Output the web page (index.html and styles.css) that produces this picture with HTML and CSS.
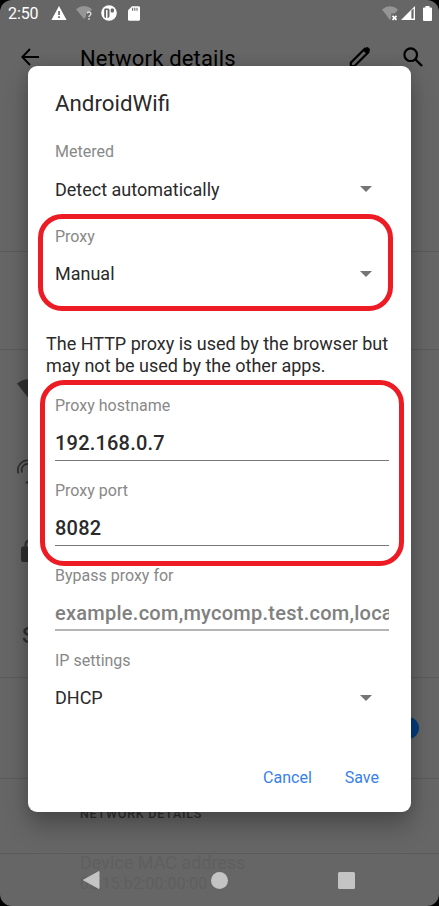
FILE: index.html
```html
<!DOCTYPE html>
<html lang="en">
<head>
<meta charset="utf-8">
<title>Network details</title>
<link rel="stylesheet" href="styles.css">
</head>
<body>
<div class="phone">
  <header class="status">
    <span class="clock">2:50</span>
    <svg class="warn" width="16" height="14" viewBox="0 0 16 14"><path d="M8 0L15.600 14H.4z" fill="#fff"/><path d="M7.200 5h1.700v4H7.200zm0 5.300h1.700V12H7.200z" fill="#666"/></svg>
    <svg class="wifi" width="18" height="15" viewBox="0 0 18 15"><path d="M0 3.200Q8-3 16 3.200L8 13z" fill="#959595"/><path d="M10 6h8v9h-8z" fill="#666"/><path d="M11 7.500c.2-2 3.900-2 3.900.2 0 1.600-1.900 1.500-1.900 3.400m0 1v1.600" fill="none" stroke="#ddd" stroke-width="1.400"/></svg>
    <svg class="pcircle" width="16" height="16" viewBox="0 0 16 16"><circle cx="8" cy="8" r="7.800" fill="#fff"/><path d="M4 3.500h3q1.500 0 1.500 1.500v6q0 2-2 2H5q-1.800 0-1.800-2V5q0-1.500.8-1.500z" fill="#666"/><path d="M5 5h1.500v8.500H5z" fill="#fff"/><rect x="9.700" y="3.500" width="3.200" height="4" rx="1" fill="#666"/></svg>
    <svg class="sd" width="12" height="15" viewBox="0 0 12 15"><path d="M4 .2h6.500Q12 .2 12 1.600v11.700q0 1.500-1.400 1.500H1.400Q0 14.800 0 13.300V4.200z" fill="#fff"/><path d="M4 1.700h1.200v3H4zm2.200 0h1.200v3H6.200zm2.200 0h1.200v3H8.400z" fill="#777"/></svg>
    <span class="spacer"></span>
    <svg width="16" height="15" viewBox="0 0 16 15"><path d="M0 3.500Q8-3 16 3.500L8 14z" fill="#959595"/><path d="M9.200 7.500H16V15H9.200z" fill="#666"/><path d="M10.500 9.800l4 4m0-4l-4 4" stroke="#fff" stroke-width="1.700"/></svg>
    <svg class="signal" width="14" height="14" viewBox="0 0 14 14"><path d="M14 0v14H0z" fill="#fff"/><path d="M10.400 4.500L12.600 2.500v10h-2.200z" fill="#666"/></svg>
    <svg class="battery" width="9" height="15" viewBox="0 0 9 15"><path d="M2.500 0h4v1.500H8q1 0 1 1V14q0 1-1 1H1q-1 0-1-1V2.500q0-1 1-1h1.500z" fill="#fff"/></svg>
  </header>
  <div class="toolbar">
    <svg class="back" width="18" height="18" viewBox="0 0 18 18"><path d="M18 9H2M9 1L1.300 9 9 17" fill="none" stroke="#000" stroke-width="1.900"/></svg>
    <span class="heading">Network details</span>
    <svg class="pencil" width="22" height="22" viewBox="0 0 22 22"><path d="M1.800 20.200v-3.500L15.800 2.700l3.500 3.500L5.300 20.200z" fill="none" stroke="#000" stroke-width="2.200"/><path d="M14 4.500L17 1.500q1.200-1 2.300 0l1.300 1.300q1 1.200 0 2.300l-3 3z"/></svg>
    <svg class="search" width="20" height="20" viewBox="0 0 20 20"><circle cx="7.700" cy="7.700" r="6.300" fill="none" stroke="#000" stroke-width="2.200"/><path d="M12 12l7 7" stroke="#000" stroke-width="2.400"/></svg>
  </div>
  <div class="section hero"></div>
  <div class="section actions"></div>
  <div class="section info">
    <svg width="22" height="19" viewBox="0 0 22 19"><path d="M0 4.500Q11-4 22 4.500L11 18.500z" fill="#303030"/></svg>
    <svg class="rings" width="22" height="26" viewBox="0 0 22 26"><path d="M1.500 14.500C-1 7 5 1 11.500 1.500M5 13.500C3.500 8 7 4.500 12 5" fill="none" stroke="#303030" stroke-width="1.700"/><circle cx="10" cy="23.500" r="1.300" fill="#303030"/></svg>
    <svg class="lock" width="18" height="23" viewBox="0 0 18 23"><path d="M4.500 9V6q0-4.500 4.500-4.500T13.500 6v3" fill="none" stroke="#303030" stroke-width="2"/><rect y="7.500" width="18" height="15.500" rx="2" fill="#303030"/></svg>
    <span class="letter">S</span>
  </div>
  <div class="section switch-row"><span class="switch"></span></div>
  <div class="section caption">NETWORK DETAILS</div>
  <div class="device"><div class="device-name">Device MAC address</div><div class="device-mac">02:15:b2:00:00:00</div></div>

  <nav class="nav">
    <svg width="17" height="20" viewBox="0 0 17 20"><path d="M16 1.500v17L.5 10z" fill="#c4c4c4" stroke="#c4c4c4" stroke-linejoin="round"/></svg>
    <span class="home"></span>
    <span class="recent"></span>
  </nav>

  <main class="dialog">
    <h1>AndroidWifi</h1>
    <div class="field"><div class="label">Metered</div><div class="value">Detect automatically<i class="caret"></i></div></div>
    <div class="field"><div class="label">Proxy</div><div class="value">Manual<i class="caret"></i></div></div>
    <p class="note">The HTTP proxy is used by the browser but<br>may not be used by the other apps.</p>
    <div class="field"><div class="label">Proxy hostname</div><div class="input">192.168.0.7</div></div>
    <div class="field"><div class="label">Proxy port</div><div class="input">8082</div></div>
    <div class="field"><div class="label">Bypass proxy for</div><div class="input hint">example.com,mycomp.test.com,loca</div></div>
    <div class="field"><div class="label">IP settings</div><div class="value">DHCP<i class="caret"></i></div></div>
    <div class="buttons"><span>Cancel</span><span>Save</span></div>
  </main>
  <div class="mark mark-proxy"></div>
  <div class="mark mark-host"></div>
</div>
</body>
</html>
```

FILE: styles.css
```css
* { box-sizing: border-box; }
html { background: #000; }
body { margin: 0; font-family: Roboto, sans-serif; }
svg { display: block; flex: none; }

.phone {
  position: relative;
  width: 439px;
  height: 906px;
  overflow: hidden;
  border-radius: 12px;
  background: #666;
}

.status { display: flex; align-items: center; height: 26px; padding: 0 7px 0 8px; color: #fff; }
.clock { width: 43px; font-size: 16px; letter-spacing: -0.1px; }
.wifi { margin-left: 9px; }
.pcircle { margin-left: 7px; }
.sd { margin-left: 11px; }
.spacer { flex: 1; }
.signal { margin-left: 3px; }
.battery { margin-left: 8px; }

.toolbar { display: flex; align-items: center; height: 63px; padding: 0 16px 0 21px; }
.heading { margin-left: 41px; padding-top: 1px; font-size: 22px; letter-spacing: 0.18px; flex: 1; }
.back, .pencil, .search { position: relative; top: -1px; }
.pencil { margin-right: 32px; }

.section { border-bottom: 1px solid #5b5b5b; }
.hero { height: 163px; }
.actions { height: 98px; }
.info { height: 328px; padding: 29px 17px; }
.rings { margin-top: 61px; }
.lock { margin: 54px 0 0 4px; }
.letter { display: block; margin: 61px 0 0 5px; font-size: 22px; font-weight: 500; color: #303030; }
.switch-row { display: flex; align-items: center; justify-content: flex-end; height: 101px; padding-right: 20px; }
.switch { width: 22px; height: 22px; border-radius: 50%; background: #043d7c; }
.caption { height: 75px; padding: 27px 0 0 80px; font-size: 12.5px; line-height: 15px; letter-spacing: 0.75px; color: #303030; font-weight: 500; }
.device { height: 53px; padding-left: 80px; color: #5f5f5f; }
.device-name { font-size: 18px; line-height: 18px; }
.device-mac { font-size: 16px; line-height: 24px; }

.nav { position: absolute; left: 0; right: 0; top: 854px; height: 52px; display: flex; align-items: center; padding-left: 83px; }
.home { width: 17px; height: 17px; border-radius: 50%; margin-left: 111px; background: #c4c4c4; }
.recent { width: 17px; height: 17px; border-radius: 1.5px; margin-left: 110px; background: #c4c4c4; }

.dialog {
  position: absolute;
  left: 28px;
  top: 66px;
  width: 383px;
  height: 746px;
  padding: 24px 22px 0 27px;
  border-radius: 9px;
  background: #fff;
  color: #2a2a2a;
  box-shadow: 0 14px 24px rgba(0, 0, 0, 0.26), 0 0 14px rgba(0, 0, 0, 0.12);
}
h1 { margin: 0; height: 52px; font-size: 22.3px; font-weight: 400; line-height: 27px; }
.field { height: 84.8px; }
.label { height: 20px; font-size: 16px; line-height: 20px; color: #888; }
.value { display: flex; align-items: center; justify-content: space-between; height: 34px; margin-top: 10px; padding-right: 17px; font-size: 18px; }
.caret { border: 6px solid transparent; border-width: 6px 6px 0; border-top-color: #757575; }
.note { height: 84.6px; margin: 0 -9px; padding-top: 21.3px; font-size: 18px; line-height: 22px; white-space: nowrap; }
.input { height: 35px; margin-top: 10px; padding-top: 5px; border-bottom: 1px solid #777; overflow: hidden; white-space: nowrap; font-size: 20px; line-height: 24px; font-weight: 500; letter-spacing: 0.2px; }
.hint { color: #808080; border-bottom: 2px solid #b4b4b4; letter-spacing: 0.26px; }
.buttons { display: flex; justify-content: flex-end; gap: 33px; padding: 33px 10px 0 0; font-size: 16px; line-height: 20px; color: #3780ee; }

.mark { position: absolute; border: 5px solid #ed1c24; border-radius: 24px; }
.mark-proxy { left: 38px; top: 214px; width: 355px; height: 97px; }
.mark-host { left: 40px; top: 380px; width: 364px; height: 186px; }
```
